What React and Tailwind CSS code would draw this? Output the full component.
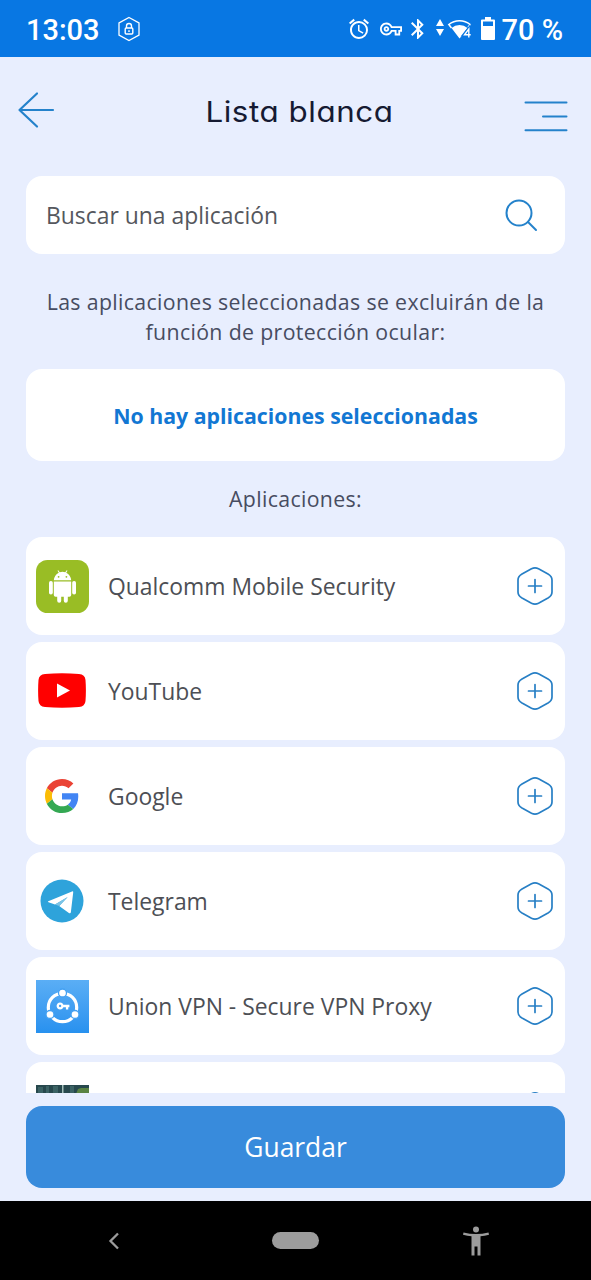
import React from "react";
import {
  MdAlarm,
  MdBluetooth,
  MdOutlineVpnKey,
  MdVpnKey,
} from "react-icons/md";

function StatusBar() {
  return (
    <div className="flex h-[57px] shrink-0 items-center bg-[#0877e3] pt-[4px] pr-7 pl-[26px] font-[Roboto,sans-serif] text-[29px] font-medium text-white">
      <span className="w-[91px] whitespace-nowrap">13:03</span>
      <svg viewBox="0 0 24 26" className="-mt-1 h-[26px] w-6" fill="none" stroke="currentColor">
        <path d="M12 1.5 22 7v12l-10 5.5L2 19V7z" strokeWidth="1.3" />
        <rect x="8.2" y="12" width="7.6" height="6" rx="1" strokeWidth="1.4" />
        <path d="M9.5 12v-2a2.5 2.5 0 0 1 5 0v2M12 14.2v1.8" strokeWidth="1.4" />
      </svg>
      <div className="-mt-1 ml-auto flex items-center">
        <MdAlarm className="size-[24px]" />
        <MdOutlineVpnKey className="ml-[9px] size-[22px]" />
        <MdBluetooth className="ml-[4px] size-[24px]" />
        <svg viewBox="0 0 36 24" className="ml-[5px] h-6 w-9" fill="currentColor">
          <path d="M5 2 9 9H1zM5 19l4-7H1z" />
          <path d="M24.500 21.500 16.500 11a12 12 0 0 1 16 0l-2 2.600-3.300 5z" />
          <path
            d="M16.500 11 13.800 7.500a17 17 0 0 1 21.400 0L33 10.500"
            fill="none"
            stroke="currentColor"
            strokeWidth="1.6"
          />
          <path
            d="M33.800 20.500v-8.500l-4.600 5.800h6.500"
            fill="none"
            stroke="#0877e3"
            strokeWidth="3.500"
          />
          <path
            d="M33.800 20.500v-8.500l-4.300 5.800h6.200"
            fill="none"
            stroke="currentColor"
            strokeWidth="1.400"
          />
        </svg>
        <svg viewBox="0 0 14 23" className="ml-[10px] h-[23px] w-[14px]" fill="currentColor">
          <path
            fillRule="evenodd"
            d="M4 0h6v2.500h3a1 1 0 0 1 1 1V22a1 1 0 0 1-1 1H1a1 1 0 0 1-1-1V3.500a1 1 0 0 1 1-1h3zM2 4.500V9h10V4.500z"
          />
        </svg>
      </div>
      <span className="ml-[6px] whitespace-nowrap">70 %</span>
    </div>
  );
}

function Header() {
  return (
    <header className="flex h-[119px] shrink-0 items-start justify-between pr-[23px] pl-[17px] text-[#2482cb]">
      <button aria-label="Volver" className="mt-[34px]">
        <svg
          viewBox="0 0 38 38"
          className="size-[38px]"
          fill="none"
          stroke="currentColor"
          strokeWidth="2.2"
          strokeLinecap="round"
          strokeLinejoin="round"
        >
          <path d="M36 19H2.500M20 2.500 2.500 19 20 35.500" />
        </svg>
      </button>
      <h1 className="mt-[34px] ml-[20px] scale-x-110 text-[28.5px] leading-[42px] tracking-[0.5px] whitespace-nowrap text-[#151a32] [font-family:Inter,sans-serif] [font-feature-settings:'cv11']">
        Lista blanca
      </h1>
      <button aria-label="Menú" className="mt-[43px]">
        <svg
          viewBox="0 0 44 32"
          className="h-8 w-11"
          fill="none"
          stroke="currentColor"
          strokeWidth="2"
          strokeLinecap="round"
        >
          <path d="M1.500 2.500h41M19 16.500h23.500M1.500 30.300h41" />
        </svg>
      </button>
    </header>
  );
}

function AndroidIcon() {
  return (
    <svg viewBox="0 0 53 53" className="size-[53px]">
      <rect width="53" height="53" rx="11.500" fill="#99bd25" />
      <g fill="#fff">
        <path d="M17.800 20.300q.6-5.600 5-7.600l-1.300-2 .8-.4 1.400 2q2.800-1 5.600 0l1.400-2 .8.4-1.300 2q4.400 2 5 7.600z" />
        <path d="M17.800 21.500h17.400v13.500q0 1.800-1.800 1.800h-1.600v4q0 2-2 2t-2-2v-4h-2.600v4q0 2-2 2t-2-2v-4h-1.600q-1.800 0-1.800-1.800z" />
        <rect x="13" y="21" width="3.800" height="13.500" rx="1.800" />
        <rect x="36.200" y="21" width="3.800" height="13.500" rx="1.800" />
      </g>
      <circle cx="22.600" cy="16.800" r=".9" fill="#99bd25" />
      <circle cx="30.400" cy="16.800" r=".9" fill="#99bd25" />
    </svg>
  );
}

function YouTubeIcon() {
  return (
    <svg viewBox="0 0 48 35" className="-mt-px -ml-px h-[35px] w-12">
      <path
        d="M7 1Q24-.6 41 1q6 .5 6.500 6 .800 10.500 0 21-.5 5.500-6.500 6-17 1.500-34 0-6-.5-6.500-6-.8-10.500 0-21Q1 1.500 7 1z"
        fill="#f00"
      />
      <path d="m19 10.500 13 7-13 7z" fill="#fff" />
    </svg>
  );
}

function GoogleIcon() {
  return (
    <svg viewBox="0 0 48 48" className="-mt-px -ml-px size-[34px]">
      <path
        fill="#ea4335"
        d="M24 9.500c3.540 0 6.710 1.220 9.210 3.600l6.850-6.850C35.900 2.380 30.470 0 24 0 14.620 0 6.510 5.380 2.560 13.220l7.980 6.190C12.430 13.720 17.740 9.500 24 9.500z"
      />
      <path
        fill="#4285f4"
        d="M46.980 24.550c0-1.570-.15-3.090-.38-4.550H24v9.020h12.940c-.58 2.960-2.260 5.480-4.780 7.180l7.730 6c4.510-4.180 7.090-10.360 7.090-17.650z"
      />
      <path
        fill="#fbbc05"
        d="M10.530 28.590c-.48-1.450-.76-2.990-.76-4.590s.27-3.140.76-4.590l-7.980-6.190C.92 16.460 0 20.120 0 24s.92 7.540 2.560 10.780l7.970-6.190z"
      />
      <path
        fill="#34a853"
        d="M24 48c6.480 0 11.930-2.130 15.890-5.810l-7.730-6c-2.150 1.450-4.920 2.300-8.160 2.300-6.260 0-11.570-4.220-13.470-9.910l-7.980 6.190C6.510 42.620 14.620 48 24 48z"
      />
    </svg>
  );
}

function TelegramIcon() {
  return (
    <svg viewBox="0 0 44 44" className="-ml-px size-11">
      <circle cx="22" cy="22" r="21.500" fill="#2ea3db" />
      <path
        d="M8.300 22.300 32 12.400q1.400-.4 1.200 1.200l-2.300 19.500q-.3 2-2 .8l-9.700-6.800L27.700 18 15 25.500l-6.500-2.200q-1.200-.4-.2-1z"
        fill="#fff"
      />
      <path d="M15 25.500 27.700 18l-8.500 9.100z" fill="#7cc4e6" />
    </svg>
  );
}

function UnionVpnIcon() {
  return (
    <div className="grid size-[53px] place-items-center bg-linear-to-b from-[#5aaef5] to-[#2791ef] text-white">
      <svg viewBox="0 0 53 53" className="col-start-1 row-start-1 size-[53px]">
        <circle
          cx="26.500"
          cy="27.500"
          r="14.200"
          fill="none"
          stroke="currentColor"
          strokeWidth="3.200"
        />
        <g fill="currentColor" stroke="#43a0f2" strokeWidth="1.300">
          <circle cx="26.500" cy="13" r="4" />
          <circle cx="14" cy="34.500" r="4" />
          <circle cx="39" cy="34.500" r="4" />
        </g>
      </svg>
      <MdVpnKey className="col-start-1 row-start-1 size-[14px]" />
    </div>
  );
}

// Striped thumbnail, only its top edge shows above the save button
function ThumbIcon() {
  return (
    <svg viewBox="0 0 53 53" className="size-[53px]">
      <path d="M0 0h53v53H0z" fill="#27484d" />
      <path d="M2 2h5v50H2zM10 1h3v50h-3zM17 1h5v50h-5zM34 1h4v50h-4z" fill="#3b6264" />
      <path d="M26 0h1.500v53H26z" fill="#a2bdb9" />
      <path d="m42 4 3-1h8v6H40z" fill="#598343" />
    </svg>
  );
}

function AddButton() {
  return (
    <button aria-label="Añadir" className="ml-auto">
      <svg
        viewBox="0 0 36 38"
        className="h-[38px] w-9"
        fill="none"
        stroke="#277fc5"
        strokeWidth="1.700"
        strokeLinecap="round"
      >
        <path d="M14.500 1.800q3.500-1.700 7 0l9.500 5.100q4 2.300 4 6v12.200q0 3.700-4 6l-9.500 5.100q-3.500 1.700-7 0L5 31.100q-4-2.300-4-6V12.900q0-3.700 4-6z" />
        <path d="M18 12.500v13M11.500 19h13" />
      </svg>
    </button>
  );
}

const apps = [
  { name: "Qualcomm Mobile Security", icon: <AndroidIcon /> },
  { name: "YouTube", icon: <YouTubeIcon /> },
  { name: "Google", icon: <GoogleIcon /> },
  { name: "Telegram", icon: <TelegramIcon /> },
  { name: "Union VPN - Secure VPN Proxy", icon: <UnionVpnIcon /> },
  { name: "", icon: <ThumbIcon /> },
];

function AppRow({ name, icon }) {
  return (
    <li className="flex h-[98px] shrink-0 items-center rounded-2xl bg-white pr-3 pl-[10px]">
      <div className="flex w-[53px] justify-center">{icon}</div>
      <span className="mt-[2px] ml-[19px] text-[22.9px] whitespace-nowrap text-[#4d4f55]">
        {name}
      </span>
      <AddButton />
    </li>
  );
}

function NavBar() {
  return (
    <nav className="flex h-[79px] shrink-0 items-center justify-between bg-black pr-[102px] pl-[107px] text-[#9c9c9c]">
      <svg viewBox="0 0 14 18" className="h-[18px] w-[14px]" fill="none" stroke="currentColor" strokeWidth="2.300">
        <path d="M11 1.500 3.500 9l7.500 7.500" />
      </svg>
      <div className="ml-[6px] h-[17px] w-[47px] rounded-full bg-current" />
      <svg viewBox="0 0 26 30" className="h-[30px] w-[26px]" fill="currentColor">
        <circle cx="13" cy="3.500" r="3" />
        <path d="M.5 6.500Q13 9.500 25.500 6.500l.5 2.300q-4.500 1.200-8.500 1.500V29.500h-3V20.500h-3v9h-3V10.300Q4.500 10 0 8.800z" />
      </svg>
    </nav>
  );
}

export default function App() {
  return (
    <div className="flex h-[1280px] w-[591px] flex-col overflow-hidden bg-[#e8eefe] [font-family:'Open_Sans',sans-serif]">
      <StatusBar />
      <Header />

      <main className="flex min-h-0 flex-1 flex-col px-[26px]">
        <div className="flex h-[78px] shrink-0 items-center justify-between rounded-2xl bg-white pr-[27px] pl-5">
          <span className="mt-[2px] text-[22.9px] text-[#55575d]">Buscar una aplicación</span>
          <svg
            viewBox="0 0 34 34"
            className="size-[34px]"
            fill="none"
            stroke="#2482cb"
            strokeWidth="2"
            strokeLinecap="round"
          >
            <circle cx="15" cy="15" r="12.500" />
            <path d="m24 24 8 8" />
          </svg>
        </div>

        <p className="mt-[33px] text-center text-[21.3px] leading-[30px] font-medium tracking-[0.35px] whitespace-nowrap text-[#474c61]">
          Las aplicaciones seleccionadas se excluirán de la
          <br />
          función de protección ocular:
        </p>

        <div className="mt-[22px] flex h-[92px] shrink-0 items-center justify-center rounded-2xl bg-white pt-[2px] text-[21.3px] font-bold whitespace-nowrap text-[#1277d3]">
          No hay aplicaciones seleccionadas
        </div>

        <h2 className="mt-[23px] text-center text-[21.3px] leading-[30px] font-medium tracking-[0.35px] text-[#474c61]">
          Aplicaciones:
        </h2>

        <ul className="mt-[23px] flex h-[556px] shrink-0 flex-col gap-[7px] overflow-hidden">
          {apps.map((app, index) => (
            <AppRow key={index} name={app.name} icon={app.icon} />
          ))}
        </ul>

        <button className="mt-[13px] h-[82px] shrink-0 rounded-2xl bg-[#388bdc] pt-[2px] text-[26.4px] text-white">
          Guardar
        </button>
      </main>

      <NavBar />
    </div>
  );
}
